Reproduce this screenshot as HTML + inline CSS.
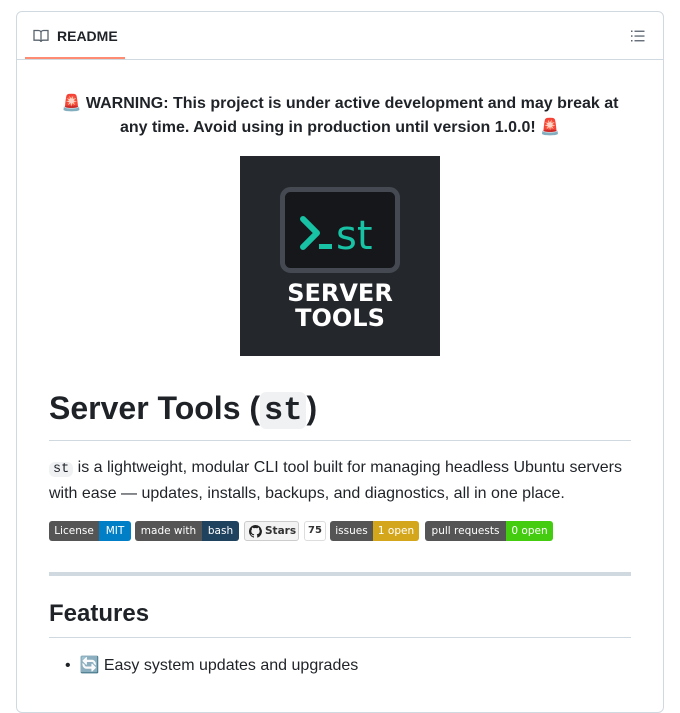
<!DOCTYPE html>
<html><head><meta charset="utf-8"><style>
html,body{margin:0;height:673px;overflow:hidden;background:#fff;font-family:"Liberation Sans",sans-serif;color:#1f2328;}
.box{position:absolute;left:16px;top:11px;width:646px;height:700px;border:1px solid #d1d9e0;border-radius:6px;}
.hdr{height:47px;border-bottom:1px solid #d1d9e0;position:relative;}
.tab{position:absolute;left:16px;top:16px;font-size:14px;font-weight:bold;}
.ul{position:absolute;left:8px;top:45px;width:100px;height:2px;background:#fd8c73;}
.warn{position:absolute;left:55px;width:570px;top:92px;text-align:center;font-weight:bold;font-size:16px;line-height:24px;}
.logo{position:absolute;left:240px;top:156px;width:200px;height:200px;background:#24272b;}
h1{position:absolute;left:49px;top:388px;margin:0;font-size:32px;font-weight:600;line-height:40px;}
code{font-family:"Liberation Mono",monospace;background:#eff1f3;border-radius:6px;padding:0 4px;}
.hr1{position:absolute;left:49px;width:582px;top:440px;height:1px;background:#d1d9e0;}
p{position:absolute;left:49px;top:456px;width:590px;margin:0;font-size:16px;line-height:24px;}
.b{position:absolute;top:521px;height:20px;display:flex;border-radius:3px;overflow:hidden;line-height:20px;font-family:"DejaVu Sans",sans-serif;font-size:10.5px;color:#fff;white-space:nowrap;}
.b span{display:block;text-align:center;}
.g{background:#555;}
.hr2{position:absolute;left:49px;width:582px;top:572px;height:4px;background:#d1d9e0;}
h2{position:absolute;left:49px;top:598px;margin:0;font-size:24px;font-weight:600;line-height:32px;}
.hr3{position:absolute;left:49px;width:582px;top:637px;height:1px;background:#d1d9e0;}
.li{position:absolute;left:65px;top:655px;font-size:16px;}
</style></head><body>
<div class="box">
<div class="hdr">
<svg style="position:absolute;left:16px;top:16px" width="16" height="16" viewBox="0 0 16 16" fill="none" stroke="#59636e" stroke-width="1.3"><path d="M1 2.5h4.5c1.4 0 2.5 1 2.5 2.3V14c0-1-1-1.8-2.2-1.8H1zM15 2.5h-4.5C9.1 2.5 8 3.5 8 4.8V14c0-1 1-1.8 2.2-1.8H15z"/></svg>
<div class="tab" style="left:40px">README</div>
<div class="ul"></div>
<svg style="position:absolute;left:613px;top:16px" width="16" height="16" viewBox="0 0 16 16" fill="#59636e"><rect x="1" y="2.5" width="1.5" height="1.5"/><rect x="1" y="7.3" width="1.5" height="1.5"/><rect x="1" y="12" width="1.5" height="1.5"/><rect x="4.5" y="2.6" width="10" height="1.3"/><rect x="4.5" y="7.4" width="10" height="1.3"/><rect x="4.5" y="12.1" width="10" height="1.3"/></svg>
</div>
</div>
<div class="warn">🚨 WARNING: This project is under active development and may break at any time. Avoid using in production until version 1.0.0! 🚨</div>
<div class="logo"><svg width="200" height="200">
<rect x="42.5" y="33.5" width="115" height="81" rx="8" fill="#15171a" stroke="#454a52" stroke-width="5"/>
<path d="M63 63l14 14-14 14" stroke="#17c2a5" stroke-width="6" fill="none" stroke-linecap="round" stroke-linejoin="round"/>
<rect x="79" y="88" width="13" height="5" fill="#17c2a5"/>
<text x="96" y="93" font-family="DejaVu Sans,sans-serif" font-size="40" fill="#17c2a5">st</text>
<text x="100" y="145" text-anchor="middle" font-family="DejaVu Sans,sans-serif" font-weight="bold" font-size="24" fill="#fff">SERVER</text>
<text x="100" y="170" text-anchor="middle" font-family="DejaVu Sans,sans-serif" font-weight="bold" font-size="24" fill="#fff">TOOLS</text>
</svg></div>
<h1>Server Tools (<code>st</code>)</h1>
<div class="hr1"></div>
<p><code style="font-size:13.5px">st</code> is a lightweight, modular CLI tool built for managing headless Ubuntu servers with ease — updates, installs, backups, and diagnostics, all in one place.</p>

<div class="b" style="left:49px"><span class="g" style="width:50px">License</span><span style="background:#007ec6;width:32px">MIT</span></div>
<div class="b" style="left:135px"><span class="g" style="width:67px">made with</span><span style="background:#1f425f;width:37px">bash</span></div>
<div class="b" style="left:244px;width:55px;box-sizing:border-box;border:1px solid #ccc;background:#f3f3f3;color:#333;font-weight:bold;line-height:18px"><span style="padding-left:4px;display:flex;align-items:center;gap:3px"><svg width="13" height="13" viewBox="0 0 16 16"><path fill="#222" d="M8 0a8 8 0 0 0-2.5 15.6c.4 0 .5-.2.5-.4v-1.5c-2.2.5-2.7-1-2.7-1-.4-.9-.9-1.2-.9-1.2-.7-.5.1-.5.1-.5.8.1 1.2.8 1.2.8.7 1.3 1.9.9 2.3.7.1-.5.3-.9.5-1.1-1.8-.2-3.6-.9-3.6-4 0-.9.3-1.6.8-2.1-.1-.2-.4-1 .1-2.1 0 0 .7-.2 2.2.8a7.6 7.6 0 0 1 4 0c1.5-1 2.2-.8 2.2-.8.4 1.1.2 1.9.1 2.1.5.6.8 1.3.8 2.1 0 3.1-1.9 3.8-3.6 4 .3.3.6.8.6 1.5v2.2c0 .2.1.5.6.4A8 8 0 0 0 8 0z"/></svg>Stars</span></div>
<div class="b" style="left:304px;width:22px;box-sizing:border-box;border:1px solid #ddd;color:#333;font-weight:bold;line-height:18px;font-size:10px"><span style="width:100%">75</span></div>
<div class="b" style="left:330px"><span class="g" style="width:43px">issues</span><span style="background:#d4a61c;width:46px">1 open</span></div>
<div class="b" style="left:425px"><span class="g" style="width:81px">pull requests</span><span style="background:#44cc11;width:47px">0 open</span></div>

<div class="hr2"></div>
<h2>Features</h2>
<div class="hr3"></div>
<div class="li">•&nbsp;&nbsp;🔄 Easy system updates and upgrades</div>
</body></html>
